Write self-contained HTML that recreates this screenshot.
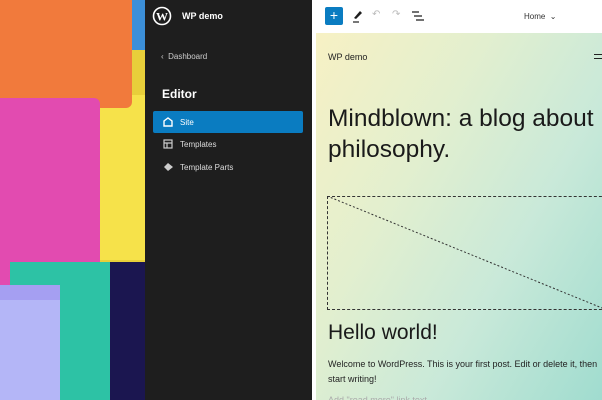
<!DOCTYPE html>
<html><head><style>
*{margin:0;padding:0;box-sizing:border-box}
html,body{width:602px;height:400px;overflow:hidden}
body{position:relative;font-family:"Liberation Sans",sans-serif;background:#1e1e1e}
.abs{position:absolute}
#img{left:0;top:0;width:145px;height:400px;overflow:hidden;background:#1a1340}
#sb{left:145px;top:0;width:167px;height:400px;background:#1e1e1e;color:#ddd}
#main{left:312px;top:0;width:290px;height:400px;background:#fff}
#canvas{left:316px;top:33px;width:286px;height:367px;overflow:hidden;background:linear-gradient(120deg,#f7f1c4 0%,#e2efcf 35%,#c9e9d9 65%,#a0dccf 100%)}
</style></head><body>
<div id="img" class="abs">
 <div class="abs" style="left:130px;top:0;width:15px;height:50px;background:#3c8fd8"></div>
 <div class="abs" style="left:100px;top:50px;width:45px;height:220px;background:#e8cf3a"></div>
 <div class="abs" style="left:100px;top:95px;width:45px;height:165px;background:#f6e24a"></div>
 <div class="abs" style="left:0;top:0;width:132px;height:108px;background:#f17a3c;border-radius:0 0 6px 0"></div>
 <div class="abs" style="left:0;top:98px;width:100px;height:188px;background:#e24bb0;border-radius:0 6px 4px 0"></div>
 <div class="abs" style="left:10px;top:262px;width:100px;height:138px;background:#2dc2a5"></div>
 <div class="abs" style="left:110px;top:262px;width:35px;height:138px;background:#1b1650"></div>
 <div class="abs" style="left:0;top:285px;width:60px;height:115px;background:#a59ff2"></div>
 <div class="abs" style="left:0;top:300px;width:60px;height:100px;background:#b4b6f7"></div>
</div>
<div id="sb" class="abs">
 <svg class="abs" style="left:7px;top:6px" width="20" height="20" viewBox="0 0 20 20"><circle cx="10" cy="10" r="8.5" fill="none" stroke="#fff" stroke-width="1.6"/><text x="10" y="14.5" font-size="12" font-weight="bold" fill="#fff" text-anchor="middle" font-family="Liberation Serif">W</text></svg>
 <div class="abs" style="left:37px;top:11px;font-size:9px;font-weight:bold;color:#fff">WP demo</div>
 <div class="abs" style="left:16px;top:52px;font-size:8px;color:#ccc">‹&nbsp; Dashboard</div>
 <div class="abs" style="left:17px;top:87px;font-size:12px;font-weight:bold;color:#fff">Editor</div>
 <div class="abs" style="left:8px;top:111px;width:150px;height:22px;background:#0a7cc1;border-radius:2px"></div>
 <svg class="abs" style="left:18px;top:117px" width="10" height="10"><path d="M1 9V4L5 1L9 4V9Z" fill="none" stroke="#fff" stroke-width="1.4"/></svg>
 <div class="abs" style="left:35px;top:118px;font-size:8px;color:#fff">Site</div>
 <svg class="abs" style="left:18px;top:139px" width="10" height="10"><rect x="1" y="1" width="8" height="8" fill="none" stroke="#ccc" stroke-width="1.2"/><path d="M1 4H9M4 4V9" stroke="#ccc" stroke-width="1.2"/></svg>
 <div class="abs" style="left:35px;top:140px;font-size:8px;color:#ddd">Templates</div>
 <svg class="abs" style="left:18px;top:162px" width="11" height="10"><path d="M1 5L5 1L10 5L5 9Z" fill="#ccc"/></svg>
 <div class="abs" style="left:35px;top:163px;font-size:8px;color:#ddd">Template Parts</div>
</div>
<div id="main" class="abs">
 <div class="abs" style="left:13px;top:7px;width:18px;height:18px;background:#0a7cc1;border-radius:2px;color:#fff;font-size:14px;text-align:center;line-height:17px">+</div>
 <svg class="abs" style="left:40px;top:9px" width="12" height="14"><path d="M2 9L8 2L10 4L4 10Z" fill="#1e1e1e"/><path d="M1 13H7" stroke="#1e1e1e" stroke-width="1.2"/></svg>
 <div class="abs" style="left:60px;top:9px;font-size:10px;color:#bbb">↶</div>
 <div class="abs" style="left:80px;top:9px;font-size:10px;color:#bbb">↷</div>
 <svg class="abs" style="left:100px;top:11px" width="12" height="10"><path d="M0 1H7M2 5H10M4 9H12" stroke="#1e1e1e" stroke-width="1.3"/></svg>
 <div class="abs" style="left:212px;top:12px;font-size:8px;color:#333">Home &nbsp;⌄</div>
</div>
<div id="canvas" class="abs">
 <div class="abs" style="left:12px;top:19px;font-size:9px;color:#222">WP demo</div>
 <div class="abs" style="left:278px;top:21px;width:10px;height:5px;border-top:1px solid #222;border-bottom:1px solid #222"></div>
 <div class="abs" style="left:12px;top:70px;width:300px;font-size:24.5px;line-height:31px;color:#1a1a1a;white-space:nowrap">Mindblown: a blog about<br>philosophy.</div>
 <div class="abs" style="left:11px;top:163px;width:290px;height:114px;border:1px dashed #333;border-right:none"></div>
 <svg class="abs" style="left:11px;top:163px" width="280" height="114"><line x1="0" y1="0" x2="280" y2="114" stroke="#333" stroke-dasharray="2,2"/></svg>
 <div class="abs" style="left:12px;top:288px;font-size:21px;color:#1a1a1a">Hello world!</div>
 <div class="abs" style="left:12px;top:324px;width:275px;font-size:9px;line-height:14.5px;color:#222">Welcome to WordPress. This is your first post. Edit or delete it, then start writing!</div>
 <div class="abs" style="left:12px;top:362px;font-size:9px;color:#aaa">Add "read more" link text</div>
</div>
</body></html>
